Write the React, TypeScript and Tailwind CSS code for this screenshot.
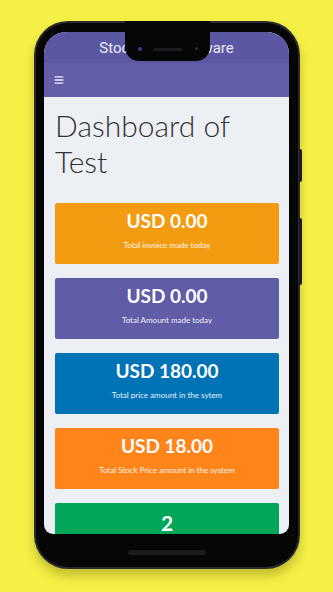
import { FaBars } from "react-icons/fa";

const cards = [
  { amount: "USD 0.00", label: "Total invoice made today", color: "bg-[#f39c12]" },
  { amount: "USD 0.00", label: "Total Amount made today", color: "bg-[#605ca8]" },
  { amount: "USD 180.00", label: "Total price amount in the sytem", color: "bg-[#0073b7]" },
  { amount: "USD 18.00", label: "Total Stock Price amount in the system", color: "bg-[#ff851b]" },
];

export default function App() {
  return (
    <div className="w-[333px] h-[592px] overflow-hidden bg-[#f4f045] pt-[21px]">
      <div className="relative ml-[34px] w-[266px] h-[548px] rounded-[34px] bg-[#2a2a30] p-[2px] shadow-[0_7px_10px_rgba(90,80,0,0.3)]">
        <div className="flex h-full flex-col rounded-[32px] bg-[#060607] pt-[9px] pl-[8px] pr-[9px]">
          {/* screen */}
          <div className="h-[502px] w-[245px] overflow-hidden rounded-t-[22px] rounded-b-[9px] bg-[#ecf0f5]">
            <div className="flex h-[31px] items-center justify-center bg-[#5b57a2] pt-[1px] font-['Roboto',sans-serif] text-[15px] text-[#ecebf6]">
              Stock Web Software
            </div>
            <div className="flex h-[34px] items-center bg-[#625ea9] pl-[10px] text-[#f1f0f8]">
              <FaBars size={10} />
            </div>
            <div className="pl-[11px] pr-[10px] font-['Lato',sans-serif]">
              <h1 className="mt-[10px] font-['Lato_Light','Open_Sans',sans-serif] text-[30px] font-light leading-[36px] text-[#333]">
                Dashboard of Test
              </h1>
              <div className="mt-[24px] flex flex-col gap-[14px]">
                {cards.map((c, i) => (
                  <div
                    key={i}
                    className={`flex h-[61px] flex-col items-center rounded-[2px] pt-[7px] text-white ${c.color}`}
                  >
                    <div className="text-[19px] font-bold leading-[22px]">{c.amount}</div>
                    <div className="mt-[7px] text-[8px] leading-[12px] text-white/90">{c.label}</div>
                  </div>
                ))}
                <div className="flex h-[61px] flex-col items-center rounded-[2px] bg-[#00a65a] pt-[8px] text-white">
                  <div className="text-[21px] font-bold leading-[24px]">2</div>
                </div>
              </div>
            </div>
          </div>
          {/* chin */}
          <div className="flex flex-1 items-center justify-center pt-[4px]">
            <div className="h-[5px] w-[78px] rounded-full bg-[#1b1b1e]" />
          </div>
        </div>

        {/* notch */}
        <div className="absolute left-[91px] top-0 flex h-[40px] w-[85px] items-start rounded-b-[14px] bg-[#060607] pl-[13px] pt-[26px]">
          <div className="h-[4px] w-[4px] rounded-full bg-[#3a3a8a]" />
          <div className="ml-[11px] mt-[1px] h-[3px] w-[29px] rounded-full bg-[#1c1c20]" />
          <div className="ml-[13px] h-[3px] w-[3px] rounded-full bg-[#2a2a2e]" />
        </div>

        {/* side buttons */}
        <div className="absolute left-[265px] top-[128px] h-[33px] w-[3px] rounded-r-[2px] bg-[#1d1b26]" />
        <div className="absolute left-[265px] top-[197px] h-[67px] w-[3px] rounded-r-[2px] bg-[#1d1b26]" />
      </div>
    </div>
  );
}
